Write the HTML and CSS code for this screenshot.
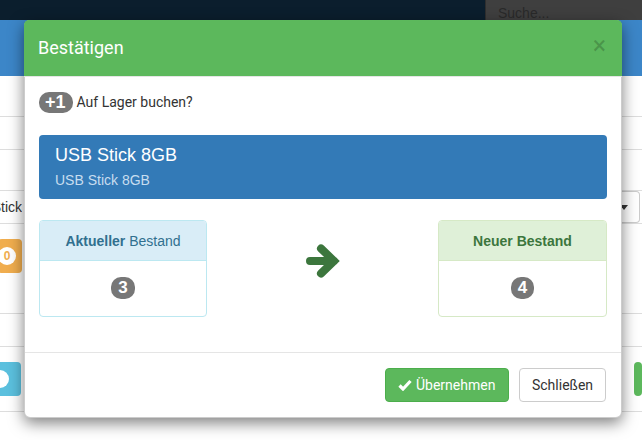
FILE: index.html
```html
<!DOCTYPE html>
<html lang="de">
<head>
    <meta charset="UTF-8">
    <meta name="viewport" content="width=device-width, initial-scale=1.0">
    <title>Lager | Bestätigen</title>
    <link rel="stylesheet" href="styles.css">
</head>
<body>
    <!-- Seite im Hintergrund -->
    <div class="page">
        <nav class="navbar">
            <div class="search">Suche...</div>
        </nav>
        <div class="banner"></div>

        <div class="row row-sm"></div>
        <div class="row row-xs"></div>
        <div class="row row-sm"></div>
        <div class="row row-xs">
            <div class="cell-left"><span class="cell-text">USB Stick</span></div>
            <div class="cell-right"><span class="select-box"><span class="caret"></span></span></div>
        </div>
        <div class="row row-lg">
            <div class="cell-left"><span class="stock-btn warning"><span class="pill">0</span></span></div>
        </div>
        <div class="row row-xs"></div>
        <div class="row row-md">
            <div class="cell-left"><span class="stock-btn info"><span class="pill"></span></span></div>
            <div class="cell-right"><span class="stock-btn success"></span></div>
        </div>
    </div>

    <!-- Dialog -->
    <div class="modal">
        <div class="modal-header">
            <h4 class="modal-title">Bestätigen</h4>
            <span class="close">&times;</span>
        </div>

        <div class="modal-body">
            <p class="question"><span class="badge badge-lg">+1</span> Auf Lager buchen?</p>

            <div class="item-active">
                <h4>USB Stick 8GB</h4>
                <p>USB Stick 8GB</p>
            </div>

            <div class="stock-row">
                <div class="panel panel-info">
                    <div class="panel-heading"><strong>Aktueller</strong> Bestand</div>
                    <div class="panel-body"><span class="badge">3</span></div>
                </div>

                <div class="arrow">
                    <svg width="40" height="38" viewBox="0 0 40 38">
                        <path d="M6 18 H30 M17 5.5 L30 18 L17 30.5" fill="none" stroke="#3c763d" stroke-width="8" stroke-linecap="round" stroke-linejoin="miter"/>
                    </svg>
                </div>

                <div class="panel panel-success">
                    <div class="panel-heading"><strong>Neuer Bestand</strong></div>
                    <div class="panel-body"><span class="badge">4</span></div>
                </div>
            </div>
        </div>

        <div class="modal-footer">
            <button class="btn btn-success">
                <svg width="14" height="12" viewBox="0 0 14 12">
                    <path d="M1.5 6.5 L5 10 L12.5 2" fill="none" stroke="#fff" stroke-width="3.2" stroke-linejoin="miter"/>
                </svg>
                Übernehmen
            </button>
            <button class="btn btn-default">Schließen</button>
        </div>
    </div>
</body>
</html>
```

FILE: styles.css
```css
:root {
    --green: #5cb85c;
    --blue: #337ab7;
    --gray-badge: #777;
    --line: #ddd;
    --radius: 4px;
}

* {
    box-sizing: border-box;
    margin: 0;
    padding: 0;
}

body {
    font-family: Roboto, 'Liberation Sans', sans-serif;
    font-size: 14px;
    line-height: 1.42857;
    color: #333;
    background: #fff;
    position: relative;
    width: 642px;
    height: 440px;
    overflow: hidden;
}

/* Hintergrundseite */
.navbar {
    height: 20px;
    background: #0b1e2d;
    display: flex;
    justify-content: flex-end;
}

.search {
    width: 157px;
    height: 20px;
    background: #3f3f3f;
    border-left: 1px solid #2e2e2e;
    color: #2a2a2a;
    font-family: 'Liberation Sans', sans-serif;
    padding: 5px 0 0 12px;
    line-height: 16px;
    overflow: hidden;
}

.banner {
    height: 56px;
    background: #3c86c8;
}

.row {
    display: flex;
    justify-content: space-between;
    align-items: center;
    border-bottom: 1px solid var(--line);
}

.row-xs { height: 33px; }
.row-sm { height: 41px; }
.row-md { height: 65px; }
.row-lg { height: 90px; align-items: flex-start; padding-top: 15px; }

.cell-left {
    width: 22px;
    display: flex;
    justify-content: flex-end;
    overflow: hidden;
}

.cell-right {
    width: 20px;
    display: flex;
    justify-content: flex-start;
    overflow: hidden;
}

.cell-text {
    white-space: nowrap;
    font-family: 'Liberation Sans', sans-serif;
    padding-top: 1px;
}

.select-box {
    display: block;
    width: 18px;
    height: 32px;
    border: 1px solid #ccc;
    border-left: none;
    border-radius: 0 4px 4px 0;
    position: relative;
}

.caret {
    position: absolute;
    left: -2px;
    top: 13px;
    border-top: 5px solid #333;
    border-left: 4px solid transparent;
    border-right: 4px solid transparent;
}

.stock-btn {
    display: flex;
    align-items: center;
    height: 34px;
    border-radius: 4px;
}

.stock-btn.warning {
    width: 48px;
    background: #f0ad4e;
    justify-content: flex-end;
    padding-right: 6px;
}

.stock-btn.info {
    width: 48px;
    background: #5bc0de;
    justify-content: flex-end;
    padding-right: 12px;
    margin-right: 1px;
}

.stock-btn.success {
    width: 40px;
    background: var(--green);
    margin-left: 12px;
}

.pill {
    display: inline-block;
    min-width: 18px;
    height: 18px;
    border-radius: 9px;
    background: #fff;
    color: #f0ad4e;
    font-family: 'Liberation Sans', sans-serif;
    font-size: 12px;
    font-weight: bold;
    line-height: 18px;
    text-align: center;
}

/* Dialog */
.modal {
    position: absolute;
    left: 24px;
    top: 20px;
    width: 598px;
    background: #fff;
    border: 1px solid rgba(0, 0, 0, 0.2);
    border-radius: 6px;
    box-shadow: 0 5px 15px rgba(0, 0, 0, 0.5);
}

.modal-header {
    display: flex;
    justify-content: space-between;
    align-items: flex-start;
    background: var(--green);
    color: #fff;
    padding: 15px 15px 15px 14px;
    border-bottom: 1px solid #e5e5e5;
    border-radius: 5px 5px 0 0;
    margin: -1px -1px 0;
}

.modal-title {
    font-size: 18px;
    font-weight: normal;
    line-height: 26px;
}

.close {
    font-family: Roboto, sans-serif;
    font-size: 25px;
    font-weight: normal;
    line-height: 1;
    color: rgba(0, 0, 0, 0.2);
    margin: -2px 1px 0 0;
}

.modal-body {
    padding: 15px 14px 15px 14px;
}

.question {
    display: flex;
    align-items: center;
    gap: 4px;
    height: 21px;
    margin-bottom: 22px;
}

.badge {
    display: inline-block;
    background: var(--gray-badge);
    color: #fff;
    font-family: 'Liberation Sans', sans-serif;
    font-weight: bold;
    font-size: 17px;
    line-height: 22px;
    padding: 0 7px;
    border-radius: 10px;
}

.badge-lg {
    height: 21px;
    line-height: 21px;
    padding: 0 7px 0 6px;
    font-size: 18px;
}

.item-active {
    background: var(--blue);
    color: #fff;
    font-family: 'Liberation Sans', sans-serif;
    border-radius: var(--radius);
    padding: 10px 16px 9px;
    margin-bottom: 21px;
}

.item-active h4 {
    font-size: 18px;
    font-weight: normal;
    line-height: 20px;
    margin-bottom: 5px;
}

.item-active p {
    color: #c7ddef;
    line-height: 20px;
}

.stock-row {
    display: grid;
    grid-template-columns: 168px 1fr 169px;
    align-items: start;
    margin-bottom: 20px;
}

.panel {
    border: 1px solid;
    border-radius: var(--radius);
    text-align: center;
    font-family: 'Liberation Sans', sans-serif;
}

.panel-heading {
    padding: 10px 15px 9px;
    line-height: 20px;
    border-bottom: 1px solid;
    border-radius: 3px 3px 0 0;
}

.panel-body {
    padding: 16px 15px 15px;
    height: 55px;
}

.panel-info {
    border-color: #bce8f1;
}

.panel-info .panel-heading {
    background: #d9edf7;
    border-color: #bce8f1;
    color: #31708f;
}

.panel-success {
    border-color: #d6e9c6;
}

.panel-success .panel-heading {
    background: #dff0d8;
    border-color: #d6e9c6;
    color: #3c763d;
}

.arrow {
    display: flex;
    justify-content: center;
    padding-top: 23px;
    padding-left: 2px;
}

.modal-footer {
    display: flex;
    justify-content: flex-end;
    gap: 10px;
    padding: 15px 15px 15px;
    border-top: 1px solid #e5e5e5;
}

.btn {
    display: inline-flex;
    align-items: center;
    gap: 4px;
    height: 34px;
    padding: 6px 12px;
    font-family: Roboto, 'Liberation Sans', sans-serif;
    font-size: 14px;
    border: 1px solid;
    border-radius: var(--radius);
    cursor: pointer;
}

.btn-success {
    background: var(--green);
    border-color: #4cae4c;
    color: #fff;
    width: 124px;
}

.btn-default {
    background: #fff;
    border-color: #ccc;
    color: #333;
    width: 87px;
    justify-content: center;
}
```
